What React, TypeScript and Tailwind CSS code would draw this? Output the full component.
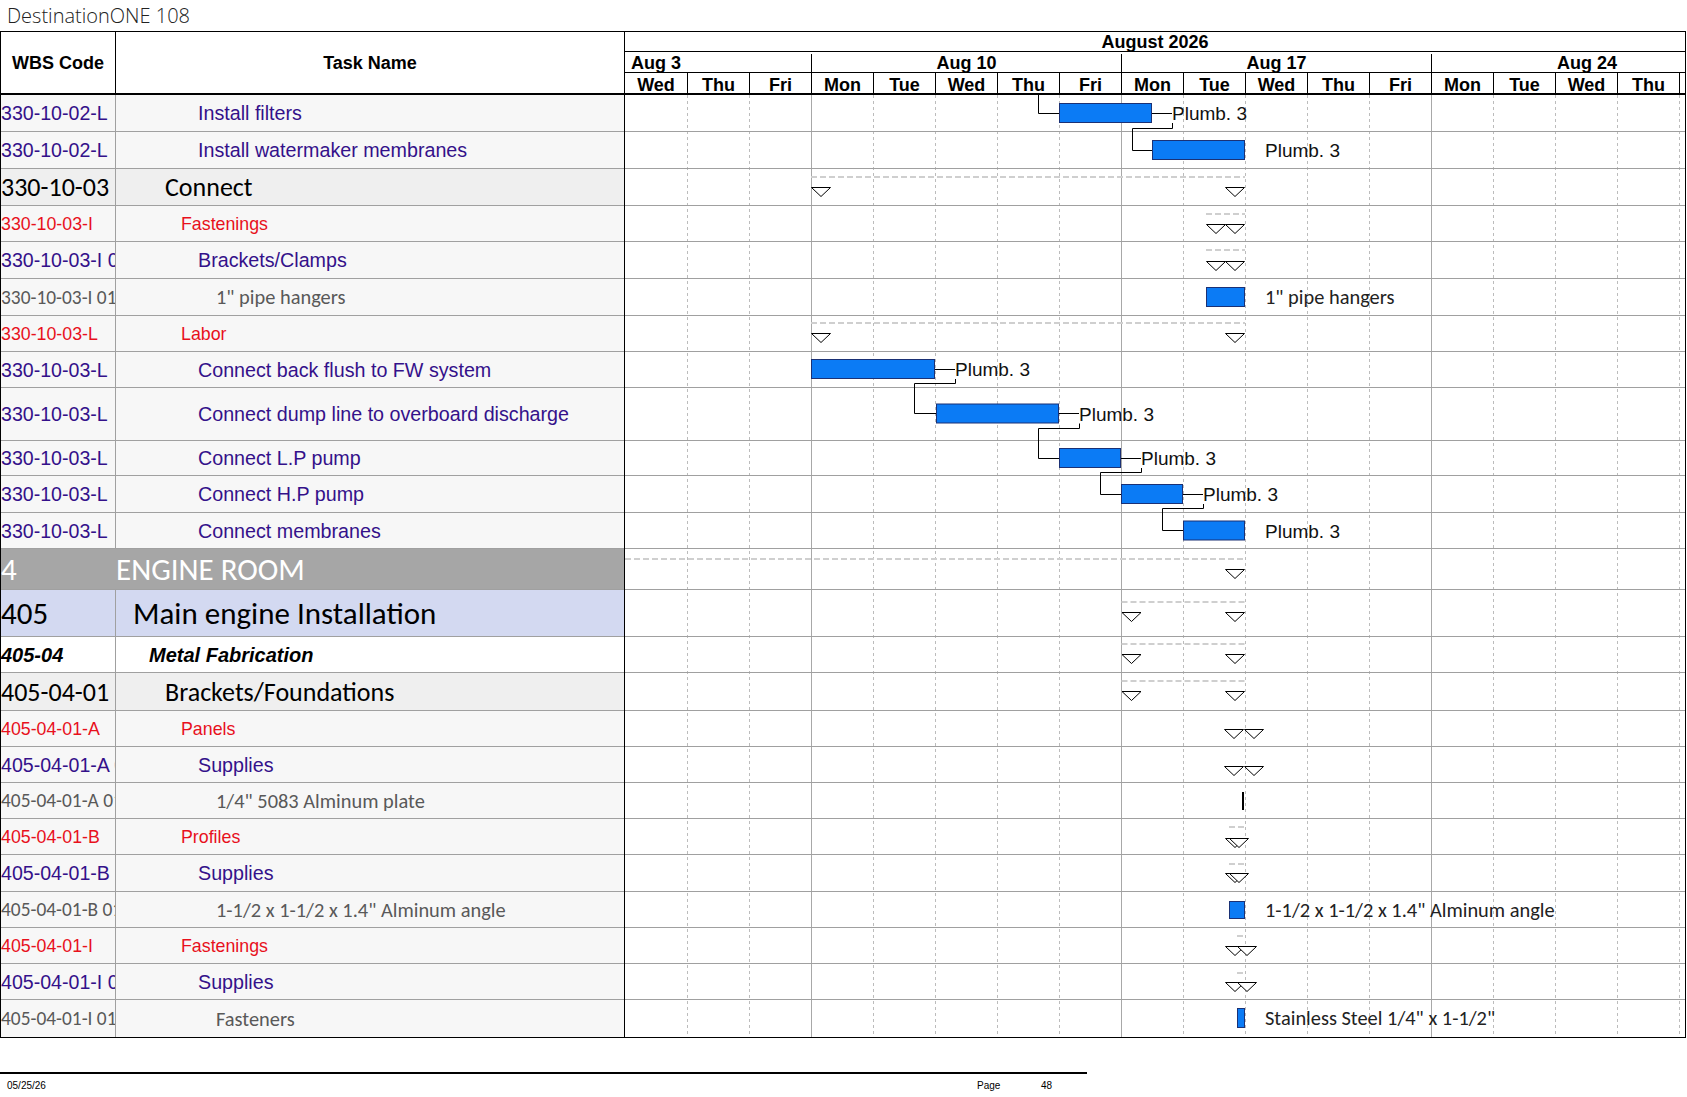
type Kind = "task" | "cat" | "item" | "sum" | "area" | "group" | "sub";

interface Row {
  wbs: string;
  name: string;
  kind: Kind;
  indent: string;
  h: string;
}

const rows: Row[] = [
  { wbs: "330-10-02-L", name: "Install filters", kind: "task", indent: "pl-[82px]", h: "h-[37px]" },
  { wbs: "330-10-02-L", name: "Install watermaker membranes", kind: "task", indent: "pl-[82px]", h: "h-[37px]" },
  { wbs: "330-10-03", name: "Connect", kind: "sum", indent: "pl-[49px]", h: "h-[37px]" },
  { wbs: "330-10-03-I", name: "Fastenings", kind: "cat", indent: "pl-[65px]", h: "h-[36px]" },
  { wbs: "330-10-03-I 01", name: "Brackets/Clamps", kind: "task", indent: "pl-[82px]", h: "h-[37px]" },
  { wbs: "330-10-03-I 01 01", name: '1" pipe hangers', kind: "item", indent: "pl-[100px]", h: "h-[37px]" },
  { wbs: "330-10-03-L", name: "Labor", kind: "cat", indent: "pl-[65px]", h: "h-[36px]" },
  { wbs: "330-10-03-L", name: "Connect back flush to FW system", kind: "task", indent: "pl-[82px]", h: "h-[36px]" },
  { wbs: "330-10-03-L", name: "Connect dump line to overboard discharge", kind: "task", indent: "pl-[82px]", h: "h-[53px]" },
  { wbs: "330-10-03-L", name: "Connect L.P pump", kind: "task", indent: "pl-[82px]", h: "h-[35px]" },
  { wbs: "330-10-03-L", name: "Connect H.P pump", kind: "task", indent: "pl-[82px]", h: "h-[37px]" },
  { wbs: "330-10-03-L", name: "Connect membranes", kind: "task", indent: "pl-[82px]", h: "h-[36px]" },
  { wbs: "4", name: "ENGINE ROOM", kind: "area", indent: "pl-0", h: "h-[41px]" },
  { wbs: "405", name: "Main engine Installation", kind: "group", indent: "pl-[17px]", h: "h-[47px]" },
  { wbs: "405-04", name: "Metal Fabrication", kind: "sub", indent: "pl-[33px]", h: "h-[36px]" },
  { wbs: "405-04-01", name: "Brackets/Foundations", kind: "sum", indent: "pl-[49px]", h: "h-[38px]" },
  { wbs: "405-04-01-A", name: "Panels", kind: "cat", indent: "pl-[65px]", h: "h-[36px]" },
  { wbs: "405-04-01-A 01", name: "Supplies", kind: "task", indent: "pl-[82px]", h: "h-[36px]" },
  { wbs: "405-04-01-A 01 01", name: '1/4" 5083 Alminum plate', kind: "item", indent: "pl-[100px]", h: "h-[36px]" },
  { wbs: "405-04-01-B", name: "Profiles", kind: "cat", indent: "pl-[65px]", h: "h-[36px]" },
  { wbs: "405-04-01-B 01", name: "Supplies", kind: "task", indent: "pl-[82px]", h: "h-[37px]" },
  { wbs: "405-04-01-B 01 01", name: '1-1/2 x 1-1/2 x 1.4" Alminum angle', kind: "item", indent: "pl-[100px]", h: "h-[36px]" },
  { wbs: "405-04-01-I", name: "Fastenings", kind: "cat", indent: "pl-[65px]", h: "h-[36px]" },
  { wbs: "405-04-01-I 01", name: "Supplies", kind: "task", indent: "pl-[82px]", h: "h-[36px]" },
  { wbs: "405-04-01-I 01 01", name: "Fasteners", kind: "item", indent: "pl-[100px]", h: "h-[37px]" },
];

const ARIAL = "font-['Liberation_Sans',Arial,sans-serif]";
const CALIBRI = "font-['Carlito','Lato',sans-serif]";

const wbsStyle: Record<Kind, string> = {
  task: `${ARIAL} text-[19.6px] text-[#34118a] pt-[2px]`,
  cat: `${ARIAL} text-[17.8px] text-[#e8101c] pt-[2px]`,
  item: `${CALIBRI} text-[19.4px] text-[#595959] pt-[1px]`,
  sum: `${CALIBRI} text-[26px] text-black`,
  area: `${CALIBRI} text-[31px] text-white pt-[1px]`,
  group: `${CALIBRI} text-[31px] text-black`,
  sub: `${ARIAL} text-[20px] font-bold italic text-black`,
};

const nameStyle: Record<Kind, string> = {
  task: `${ARIAL} text-[19.7px] text-[#34118a] pt-[2px]`,
  cat: `${ARIAL} text-[17.8px] text-[#e8101c] pt-[2px]`,
  item: `${CALIBRI} text-[20.4px] text-[#595959] pt-[1px]`,
  sum: `${CALIBRI} text-[26px] text-black`,
  area: `${CALIBRI} text-[31px] text-white pt-[1px]`,
  group: `${CALIBRI} text-[31px] text-black`,
  sub: `${ARIAL} text-[20px] font-bold italic text-black`,
};

const rowBg: Record<Kind, string> = {
  task: "bg-[#f7f7f7]",
  cat: "bg-[#f7f7f7]",
  item: "bg-[#f7f7f7]",
  sum: "bg-[#efefef]",
  area: "bg-[#a6a6a6]",
  group: "bg-[#d3d9f1]",
  sub: "bg-white",
};

const days = ["Wed", "Thu", "Fri", "Mon", "Tue", "Wed", "Thu", "Fri", "Mon", "Tue", "Wed", "Thu", "Fri", "Mon", "Tue", "Wed", "Thu"];

// chart origin in page coordinates
const CX = 625;
const CY = 95;
const BODY_H = 942;
const boundaries = [132, 169, 206, 242, 279, 316, 352, 388, 441, 476, 513, 549, 590, 637, 673, 711, 747, 783, 819, 855, 892, 928, 964, 1000];

const bars = [
  { x1: 1059, x2: 1152, m: 113, h: 20 },
  { x1: 1152, x2: 1245, m: 150, h: 20 },
  { x1: 1206, x2: 1245, m: 297, h: 20 },
  { x1: 811, x2: 935, m: 369, h: 20 },
  { x1: 936, x2: 1059, m: 413.5, h: 20 },
  { x1: 1059, x2: 1121, m: 458, h: 20 },
  { x1: 1121, x2: 1183, m: 494, h: 20 },
  { x1: 1183, x2: 1245, m: 530.5, h: 20 },
  { x1: 1229, x2: 1245, m: 910, h: 18 },
  { x1: 1237, x2: 1245, m: 1018, h: 20 },
];

const links: [number, number][][] = [
  [[1038.5, 95], [1038.5, 113.5], [1059, 113.5]],
  [[1152, 113.5], [1172, 113.5]],
  [[1172.5, 123], [1172.5, 128.5], [1132.5, 128.5], [1132.5, 150.5], [1152, 150.5]],
  [[935, 369.5], [955, 369.5]],
  [[955.5, 379], [955.5, 383.5], [914.5, 383.5], [914.5, 413.5], [936, 413.5]],
  [[1059, 413.5], [1079, 413.5]],
  [[1079.5, 423.5], [1079.5, 428.5], [1038.5, 428.5], [1038.5, 458.5], [1059, 458.5]],
  [[1121, 458.5], [1141, 458.5]],
  [[1141.5, 468], [1141.5, 472.5], [1100.5, 472.5], [1100.5, 494.5], [1121, 494.5]],
  [[1183, 494.5], [1203, 494.5]],
  [[1203.5, 504], [1203.5, 508.5], [1162.5, 508.5], [1162.5, 530.5], [1183, 530.5]],
];

const plumbLabels = [
  { x: 1172, m: 113 },
  { x: 1265, m: 150 },
  { x: 955, m: 369 },
  { x: 1079, m: 413.5 },
  { x: 1141, m: 458 },
  { x: 1203, m: 494 },
  { x: 1265, m: 530.5 },
];

const itemLabels = [
  { text: '1" pipe hangers', m: 297 },
  { text: '1-1/2 x 1-1/2 x 1.4" Alminum angle', m: 910 },
  { text: 'Stainless Steel 1/4" x 1-1/2"', m: 1018 },
];

// summary bars: start, end, dashed line y, triangle top y
const summaries = [
  { s: 811, e: 1245, d: 177, t: 187, start: true },
  { s: 1206, e: 1245, d: 214, t: 224, start: true },
  { s: 1206, e: 1245, d: 250, t: 261, start: true },
  { s: 811, e: 1245, d: 323, t: 333, start: true },
  { s: 625, e: 1245, d: 559, t: 569, start: false },
  { s: 1121.5, e: 1245, d: 602, t: 612, start: true },
  { s: 1121.5, e: 1245, d: 644, t: 654, start: true },
  { s: 1121.5, e: 1245, d: 681, t: 691, start: true },
  { s: 1244, e: 1244, d: 0, t: 729, start: true },
  { s: 1244, e: 1244, d: 0, t: 766, start: true },
  { s: 1229, e: 1245, d: 827, t: 838, start: true },
  { s: 1229, e: 1245, d: 864, t: 873, start: true },
  { s: 1237, e: 1245, d: 936, t: 946, start: true },
  { s: 1237, e: 1245, d: 973, t: 982, start: true },
];

const pts = (arr: [number, number][]): string => arr.map(([a, b]) => `${a - CX},${b - CY}`).join(" ");

const tri = (x: number, t: number): string => pts([[x + 0.5, t + 0.5], [x + 19.5, t + 0.5], [x + 10, t + 9.5]]);

const ChartBody = (): JSX.Element => (
  <svg width={1060} height={BODY_H} className="block">
    {/* day / week grid */}
    {Array.from({ length: 17 }, (_, i) => i + 1).map((i) => {
      const monday = i === 3 || i === 8 || i === 13;
      return (
        <line
          key={i}
          x1={62 * i + 0.5}
          y1={0}
          x2={62 * i + 0.5}
          y2={BODY_H}
          stroke={monday ? "#a8a8a8" : "#bcbcbc"}
          strokeWidth={1}
          strokeDasharray={monday ? undefined : "3 3"}
        />
      );
    })}
    {boundaries.map((b) => (
      <line key={b} x1={0} y1={b - CY - 0.5} x2={1060} y2={b - CY - 0.5} stroke="#a0a0a0" strokeWidth={1} />
    ))}

    {/* summary lines and end markers */}
    {summaries.map((s, i) => (
      <g key={i}>
        {s.d > 0 && (
          <line x1={s.s - CX} y1={s.d - CY} x2={s.e - CX} y2={s.d - CY} stroke="#cfcfcf" strokeWidth={2} strokeDasharray="6 3" />
        )}
        <polygon points={tri(s.e - 20, s.t)} fill="white" stroke="black" strokeWidth={1} />
        {s.start && <polygon points={tri(s.s, s.t)} fill="white" stroke="black" strokeWidth={1} />}
      </g>
    ))}

    {/* task bars */}
    {bars.map((b, i) => (
      <rect
        key={i}
        x={b.x1 - CX + 0.5}
        y={b.m - b.h / 2 - CY + 0.5}
        width={b.x2 - b.x1 - 1}
        height={b.h - 1}
        fill="#0b7bf5"
        stroke="#1b3175"
        strokeWidth={1}
      />
    ))}
    <rect x={1242 - CX} y={792 - CY} width={2} height={18} fill="black" />

    {links.map((l, i) => (
      <polyline key={i} points={pts(l)} fill="none" stroke="black" strokeWidth={1} />
    ))}

    {plumbLabels.map((l, i) => (
      <text key={i} x={l.x - CX} y={l.m - CY + 7} className={`${ARIAL} text-[19px]`} fill="#111">
        Plumb. 3
      </text>
    ))}
    {itemLabels.map((l, i) => (
      <text key={i} x={1265 - CX} y={l.m - CY + 7} className={`${CALIBRI} text-[20.4px]`} fill="#222">
        {l.text}
      </text>
    ))}
  </svg>
);

const App = (): JSX.Element => {
  return (
    <div className="w-[1687px] h-[1097px] bg-white overflow-hidden">
      <div className="h-[31px] pl-[7px] flex items-center font-['Open_Sans',sans-serif] font-light text-[20px] text-[#222]">
        DestinationONE 108
      </div>

      <div className="w-[1686px] flex border-t border-b border-black">
        {/* task table */}
        <div className="w-[625px] shrink-0 border-l border-r border-black">
          <div className={`h-[63px] flex border-b-2 border-black ${ARIAL} font-bold text-[18px] text-black`}>
            <div className="w-[115px] shrink-0 border-r border-black flex items-center justify-center pt-[2px]">WBS Code</div>
            <div className="flex-1 flex items-center justify-center pt-[2px]">Task Name</div>
          </div>
          {rows.map((r, i) => (
            <div
              key={i}
              className={`${r.h} flex ${rowBg[r.kind]} ${i < rows.length - 1 ? "border-b border-[#a0a0a0]" : ""}`}
            >
              <div
                className={`w-[115px] shrink-0 overflow-hidden whitespace-nowrap flex items-center leading-none border-r ${
                  r.kind === "area" ? "border-[#a6a6a6]" : "border-[#a0a0a0]"
                } ${wbsStyle[r.kind]}`}
              >
                {r.wbs}
              </div>
              <div className={`flex-1 overflow-hidden whitespace-nowrap flex items-center leading-none ${r.indent} ${nameStyle[r.kind]}`}>
                {r.name}
              </div>
            </div>
          ))}
        </div>

        {/* timescale and chart */}
        <div className="w-[1061px] shrink-0 border-r border-black">
          <div className={`${ARIAL} font-bold text-[18px] text-black leading-none`}>
            <div className="h-[20px] border-b border-black flex items-center justify-center">August 2026</div>
            <div className="h-[21px] border-b border-black flex pt-[2px]">
              <div className="w-[186px] shrink-0 flex items-center pl-[6px]">Aug 3</div>
              <div className="w-[310px] shrink-0 border-l border-black flex items-center justify-center">Aug 10</div>
              <div className="w-[310px] shrink-0 border-l border-black flex items-center justify-center">Aug 17</div>
              <div className="flex-1 border-l border-black flex items-center overflow-hidden">
                <div className="w-[310px] shrink-0 text-center">Aug 24</div>
              </div>
            </div>
            <div className="h-[22px] border-b-2 border-black flex">
              {days.map((d, i) => (
                <div
                  key={i}
                  className={`w-[62px] shrink-0 flex items-center justify-center pt-[3px] ${i > 0 ? "border-l border-black" : ""}`}
                >
                  {d}
                </div>
              ))}
              <div className="flex-1 border-l border-black" />
            </div>
          </div>
          <ChartBody />
        </div>
      </div>

      <div className="mt-[34px] w-[1087px] border-t-2 border-black" />
      <div className="flex pl-[7px] pt-[7px] font-['Liberation_Sans_Narrow','Liberation_Sans',sans-serif] text-[10px] text-black leading-none">
        <span className="w-[970px] shrink-0">05/25/26</span>
        <span className="w-[64px] shrink-0">Page</span>
        <span>48</span>
      </div>
    </div>
  );
};

export default App;
